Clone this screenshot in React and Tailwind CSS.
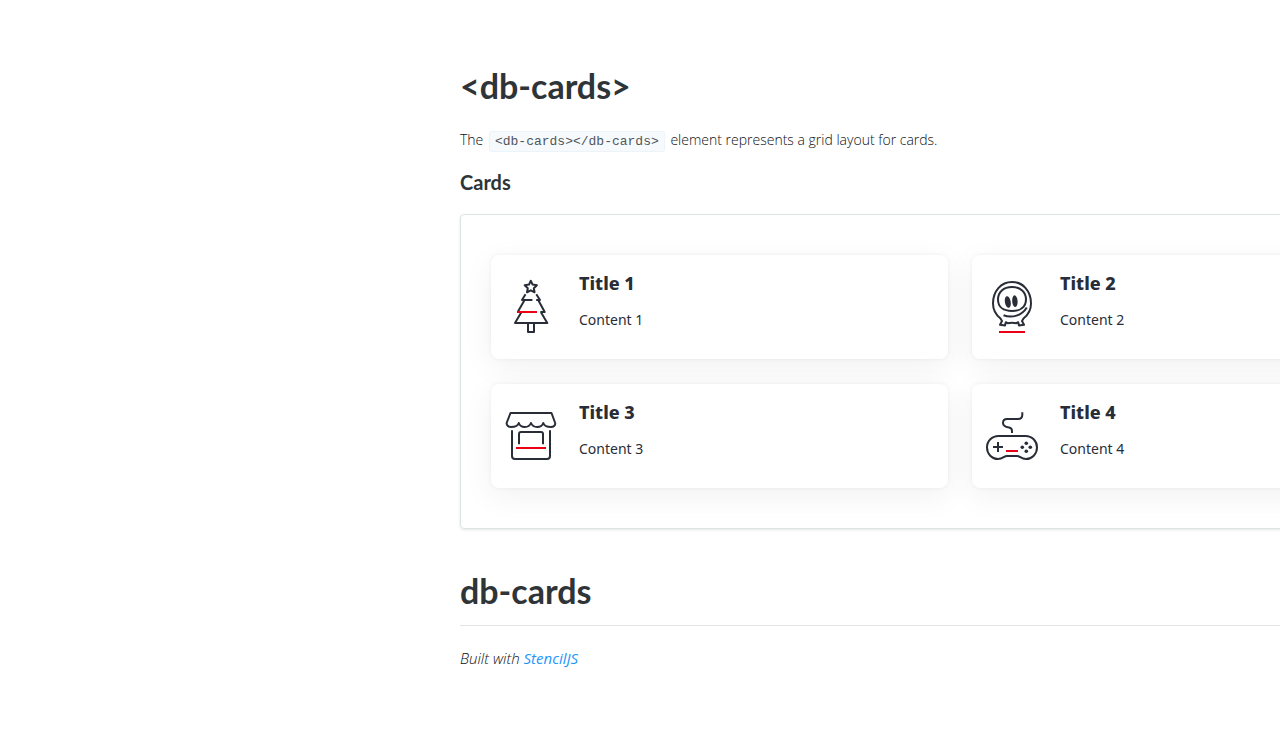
const ink = "#282d37";
const red = "#ec0016";

function Icon({ children }) {
  return (
    <svg
      className="size-16 shrink-0"
      viewBox="0 0 64 64"
      fill="none"
      stroke={ink}
      strokeWidth="2"
      strokeLinejoin="round"
      aria-hidden="true"
    >
      {children}
    </svg>
  );
}

function TreeIcon() {
  return (
    <Icon>
      <path d="M31.8 5.8l1.8 3.8 4.3.6-3.1 3 .8 4.1-3.8-2-3.8 2 .8-4.1-3.1-3 4.3-.6z" />
      <path d="M26.5 19.2L23 25h10.4M37.3 19.2L41 25h-3.8" />
      <path d="M25.6 25L19 36.4M39.2 25l6.5 12h-4.4" />
      <path d="M22.2 37.5L16 48h32.3l-6.2-10.5M29 48v9h6v-9" />
      <path stroke={red} d="M18 37h20" />
    </Icon>
  );
}

function AlienIcon() {
  return (
    <Icon>
      <path d="M20.5 43.5C15.5 39.5 13 34 13 28.5C13 16 21 7 32 7s19 9 19 21.5C51 34 48.5 39.5 43.5 43.5L42 46 44 49.8 39 50.5 38.2 47.2 36.5 48.2C33.500 47.6 30.5 47.6 27.5 48.2L25.8 47.2 25 50.500 20 49.8 22 46z" />
      <path d="M32 12C40.5 12 46 17 46 24.5C46 32 40.5 36 32 36S18 32 18 24.500C18 17 23.5 12 32 12z" />
      <path d="M23.5 40.3C32 43.5 42 40.5 46.8 32.5" />
      <ellipse cx="27.8" cy="27" rx="2.9" ry="5.9" fill={ink} stroke="none" transform="rotate(-10 27.8 27)" />
      <ellipse cx="34.9" cy="26.2" rx="2.7" ry="5.9" fill={ink} stroke="none" transform="rotate(-4 34.9 26.2)" />
      <path stroke={red} d="M19 57h26" />
    </Icon>
  );
}

function ShopIcon() {
  return (
    <Icon>
      <path d="M11.5 9h41l3.5 9.5C57 21 54.5 23 52 23c-3.5 0-7-1.5-7.7-4C43.5 21.5 41 23 38.2 23S33 21.5 32 19c-1 2.5-3.5 4-6.2 4s-5.200-1.5-6-4c-.7 2.5-4.2 4-7.8 4-2.5 0-5-2-4.2-4.5z" />
      <path d="M13 26.3V52q0 3 3 3h32q3 0 3-3V26.3M20 40.3V30q0-2 2-2h20q2 0 2 2v10.3" />
      <path stroke={red} d="M17 44h30" />
    </Icon>
  );
}

function GamepadIcon() {
  return (
    <Icon>
      <path d="M32 29v-2q0-3-3-3.5c-3-.5-6-1-6-4.5q0-4 4-4h11q4.3 0 4.3-4V8.3" />
      <path d="M18.5 32h27C52 32 57 37 57 43.5S52 55 46 55c-5 0-6-3-9-3H27c-3 0-4 3-9 3C12 55 7 50 7 43.5S12 32 18.5 32z" />
      <path d="M18 38v10M13 43h10" />
      <path stroke={red} d="M26 47h12" />
      <g fill={ink} stroke="none">
        <circle cx="46.3" cy="39.3" r="1.8" />
        <circle cx="42.3" cy="43.3" r="1.8" />
        <circle cx="50.3" cy="43.3" r="1.8" />
        <circle cx="46.3" cy="47.3" r="1.8" />
      </g>
    </Icon>
  );
}

const cards = [
  { title: "Title 1", content: "Content 1", Picture: TreeIcon },
  { title: "Title 2", content: "Content 2", Picture: AlienIcon },
  { title: "Title 3", content: "Content 3", Picture: ShopIcon },
  { title: "Title 4", content: "Content 4", Picture: GamepadIcon },
];

function Card({ title, content, Picture }) {
  return (
    <article className="flex gap-4 rounded-lg bg-white px-2 py-5 font-['Noto_Sans',sans-serif] text-[#282d37] shadow-[0_0_4px_rgba(0,0,0,0.06),0_8px_32px_rgba(0,0,0,0.06)]">
      <Picture />
      <div>
        <h4 className="-mt-1 text-lg leading-6 font-extrabold">{title}</h4>
        <p className="mt-[13px] text-sm leading-6 font-normal">{content}</p>
      </div>
    </article>
  );
}

export default function App() {
  return (
    <div className="overflow-x-hidden bg-white pl-[460px]">
      <main className="w-[1000px] pt-[62px] pb-16 font-['Open_Sans',sans-serif] text-sm text-[#2e3438]">
        <h1 className="font-['Lato',sans-serif] text-[34px] leading-12 font-bold">&lt;db-cards&gt;</h1>
        <p className="mt-[18px] leading-6 font-light text-[#0c1014]">
          The{" "}
          <code className="mx-0.5 rounded-[3px] border border-[#ecf4f9] bg-[#f7fafc] px-[5px] py-[2px] font-['Liberation_Mono',monospace] text-[13px] text-[#50565a]">
            &lt;db-cards&gt;&lt;/db-cards&gt;
          </code>{" "}
          element represents a grid layout for cards.
        </p>
        <h3 className="mt-3 font-['Lato',sans-serif] text-xl leading-8 font-bold">Cards</h3>
        <section className="mt-4 grid grid-cols-2 gap-x-6 gap-y-[25px] rounded-sm border border-[#dde4e6] px-[30px] py-10 shadow-[0_1px_3px_rgba(0,0,0,0.1)]">
          {cards.map((card) => (
            <Card key={card.title} {...card} />
          ))}
        </section>
        <h2 className="mt-[38px] border-b border-[#e3e3e3] pb-[10px] font-['Lato',sans-serif] text-[34px] leading-12 font-bold">
          db-cards
        </h2>
        <p className="mt-5 text-[15px] leading-6 font-light text-[#0c1014] italic">
          Built with{" "}
          <a href="https://stenciljs.com/" className="font-normal text-[#1e96fc]">
            StencilJS
          </a>
        </p>
      </main>
    </div>
  );
}
